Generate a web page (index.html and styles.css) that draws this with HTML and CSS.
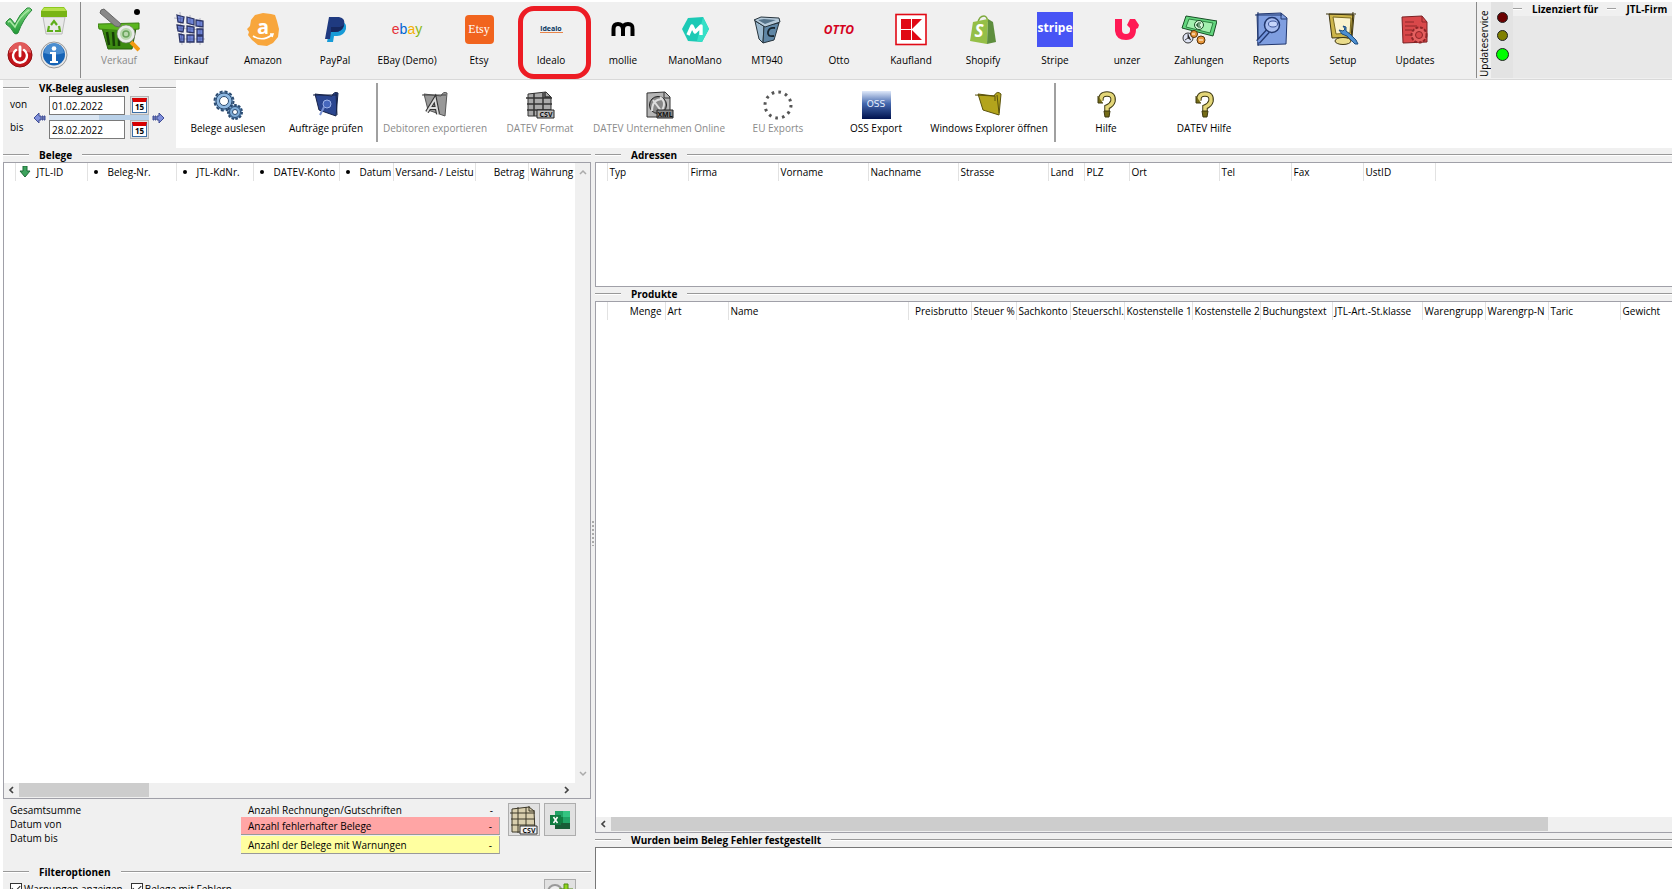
FILE: index.html
```html
<!DOCTYPE html>
<html lang="de">
  <head>
    <meta charset="UTF-8" />
    <meta name="viewport" content="width=device-width, initial-scale=1.0" />
    <title>VK-Belege</title>
    <link rel="stylesheet" href="styles.css">
  </head>
  <body>
    <div class="app">
      <header class="toolbar">
        <div class="quick">
          <button class="quick-btn" type="button" aria-label="OK">
            <svg viewBox="0 0 28 28"><defs><linearGradient id="gCheck" x1="0" y1="0" x2="0" y2="1"><stop offset="0" stop-color="#7fd67f"/><stop offset="1" stop-color="#1f9a35"/></linearGradient></defs><path d="M1 15 4 12q1-1 2 0l4 5Q15 6 22 1q3-1 5 2Q18 12 13 26q-2 2-4 0Q6 20 1 17z" fill="url(#gCheck)" stroke="#2a8a3c"/><path d="M3 15l2-1 5 6Q15 9 24 3" fill="none" stroke="#a9e8a5" stroke-width="1.5"/></svg>
          </button>
          <button class="quick-btn" type="button" aria-label="Papierkorb">
            <svg viewBox="0 0 28 28"><path d="M3 10h22l-3 17H6z" fill="#e9e9e9" stroke="#bcbcbc"/><path d="M1 4l3-4h20l3 4v6H1z" fill="#8cc81e"/><path d="M1 4h26v6H1z" fill="#78b414"/><path d="M4 1h20l2 3H2z" fill="#b5e04a"/><path d="M11 18l3-4 3 4M19 19l1 5h-5M9 19l-1 5h5" fill="none" stroke="#5fae1c" stroke-width="2.2"/></svg>
          </button>
          <button class="quick-btn" type="button" aria-label="Beenden">
            <svg viewBox="0 0 28 28"><circle cx="15" cy="14" r="12" fill="#c4161c" stroke="#8f0d10"/><path d="M4 12a11 11 0 0 1 22 0Q15 7 4 12z" fill="#e05a5a"/><path d="M11 9a7 7 0 1 0 8 0" fill="none" stroke="#fff" stroke-width="2.4" stroke-linecap="round"/><path d="M15 6v9" stroke="#fff" stroke-width="2.8" stroke-linecap="round"/></svg>
          </button>
          <button class="quick-btn" type="button" aria-label="Info">
            <svg viewBox="0 0 28 28"><circle cx="14" cy="14" r="13" fill="#e8e8e8" stroke="#999"/><circle cx="14" cy="13.500" r="11" fill="#1663b5"/><path d="M4 12a10 10 0 0 1 20 0Q14 15 4 12z" fill="#4a8dd0"/><circle cx="14" cy="7.500" r="2.300" fill="#fff"/><path d="M10 11h6v9h2v2h-8v-2h2v-7h-2z" fill="#fff"/></svg>
          </button>
        </div>
        <nav class="tools">
          <button class="tool disabled" type="button">
            <svg class="icon basket" viewBox="0 0 42 44"><path d="M4 20h34l-4 21H10z" fill="#3c8a12" stroke="#275f0a"/><path d="M0 16l41-1v6q-20 3-40 0z" fill="#5bb51f" stroke="#3b8012"/><path d="M9 24l2 13M15 24l1 14M21 24v14" stroke="#163f06" stroke-width="2.500"/><path d="M3 2l3-1 17 15-2 3-4-1L2 5z" fill="#888" stroke="#666"/><path d="M33 34l8 8" stroke="#f39a14" stroke-width="4"/><circle cx="28" cy="26" r="7.500" fill="#b9d8ad" stroke="#e8ebe8" stroke-width="3"/><circle cx="28" cy="26" r="9" fill="none" stroke="#777" stroke-width=".6"/><circle cx="28" cy="26" r="3" fill="none" stroke="#6aa45c" stroke-width="1.500"/><circle cx="39" cy="4" r="3" fill="#000"/></svg>
            <span>Verkauf</span>
          </button>
          <button class="tool" type="button">
            <svg class="icon" viewBox="0 0 36 36"><g fill="#6f84d6" stroke="#2c3566" stroke-width="1.300"><path d="M4 4l7 2-1 6-5-1zM14 6l7 2v6l-7-2zM23 9l7 1v6l-7-1zM4 14l7 1-1 6-5-1zM14 15l7 1v6l-7-1zM24 18h6v6h-6zM6 23l5 1v7H7zM14 24h7v7h-7zM24 25h6v6h-6z"/></g><path d="M1 7l10 1M3 17l27 2M6 28h26M7 1l2 33M17 4v29M27 7v27" stroke="#2c3566" stroke-width=".5" opacity=".6"/></svg>
            <span>Einkauf</span>
          </button>
          <button class="tool" type="button">
            <svg class="icon" viewBox="0 0 36 36"><path d="M10 4l8-2 8 1 4 1 2 6 2 8-1 8-5 6-6 3-9-1-6-5-4-5 1-3-2-3 3-3 1-6z" fill="#f8a63c"/><text x="18" y="23" class="logo-amazon">a</text><path d="M8 25q9 6 19-1M25 23l3 0-1 3" fill="none" stroke="#fff" stroke-width="1.600"/></svg>
            <span>Amazon</span>
          </button>
          <button class="tool" type="button">
            <svg class="icon" viewBox="0 0 36 36"><path d="M14 11h11q5 1 4 7-2 7-9 7h-3l-1 6h-6z" fill="#179bd7"/><path d="M12 6h10q7 1 5 9-2 6-9 6h-4l-1 7H8z" fill="#1f3a80"/><path d="M14 16h9l4-2q-2 7-9 7h-4z" fill="#16285f"/></svg>
            <span>PayPal</span>
          </button>
          <button class="tool" type="button">
            <svg class="icon" viewBox="0 0 36 36"><text x="18" y="23" class="logo-ebay"><tspan fill="#e53238">e</tspan><tspan fill="#0064d2">b</tspan><tspan fill="#f5af02">a</tspan><tspan fill="#86b817">y</tspan></text></svg>
            <span>EBay (Demo)</span>
          </button>
          <button class="tool" type="button">
            <svg class="icon" viewBox="0 0 36 36"><rect x="4" y="4" width="29" height="29" rx="4" fill="#f1641e"/><text x="18" y="22" class="logo-etsy">Etsy</text></svg>
            <span>Etsy</span>
          </button>
          <button class="tool marked" type="button">
            <svg class="icon" viewBox="0 0 36 36"><text x="18" y="20" class="logo-idealo">idealo</text><path d="M7 21.500h23" stroke="#e8854a"/></svg>
            <span>Idealo</span>
          </button>
          <button class="tool" type="button">
            <svg class="icon" viewBox="0 0 36 36"><path d="M8.500 25v-7q0-5 4.500-5t5 5v7m0-7q0-5 5-5t4.500 5v7" fill="none" stroke="#000" stroke-width="4"/></svg>
            <span>mollie</span>
          </button>
          <button class="tool" type="button">
            <svg class="icon" viewBox="0 0 36 36"><path d="M11 7l15-1 6 12-7 13-14-1-6-12z" fill="#1cc9b5"/><path d="M26 6l6 12-7 13-5-1z" fill="#35e0c7"/><path d="M11 24l4-9 3 6 6-6v9" fill="none" stroke="#fff" stroke-width="3.400" stroke-linejoin="round"/></svg>
            <span>ManoMano</span>
          </button>
          <button class="tool" type="button">
            <svg class="icon" viewBox="0 0 36 36"><path d="M6 10l9 5-1 17-4-4z" fill="#9bb9cf" stroke="#26333c"/><path d="M15 15l15-3-5 17-11 3z" fill="#5f86a5" stroke="#26333c"/><path d="M5 9l7-3 18 1 1 4-15 5z" fill="#b6cbdb" stroke="#26333c"/><path d="M9 9l6-1 12 1-11 4z" fill="#56748b"/><path d="M26 17q-6-1-7 4t6 4" fill="none" stroke="#16242e" stroke-width="1.800"/></svg>
            <span>MT940</span>
          </button>
          <button class="tool" type="button">
            <svg class="icon" viewBox="0 0 36 36"><text x="18" y="23" class="logo-otto">OTTO</text></svg>
            <span>Otto</span>
          </button>
          <button class="tool" type="button">
            <svg class="icon" viewBox="0 0 36 36"><rect x="3" y="3.500" width="30" height="30" fill="#fff" stroke="#e10915" stroke-width="1.600"/><path d="M8 8h10v10H8zM8 19h10v10H8zM19 8h10L19 18zM19 19l10 10H19z" fill="#e10915"/></svg>
            <span>Kaufland</span>
          </button>
          <button class="tool" type="button">
            <svg class="icon" viewBox="0 0 36 36"><path d="M13 12q1-7 6-7 3 0 4 6" fill="none" stroke="#7da93c" stroke-width="1.500"/><path d="M8 11l15-3-1 25-17-3z" fill="#95bf47"/><path d="M23 8l5 3 3 20-9 2z" fill="#5e8e3e"/><text x="14" y="26" class="logo-shopify">S</text></svg>
            <span>Shopify</span>
          </button>
          <button class="tool" type="button">
            <svg class="icon" viewBox="0 0 36 36"><path d="M0 1h36v35H0z" fill="#4754f5"/><text x="18" y="21" class="logo-stripe">stripe</text></svg>
            <span>Stripe</span>
          </button>
          <button class="tool" type="button">
            <svg class="icon" viewBox="0 0 36 36"><path d="M6 8h7v11q0 4 4 4t4-4v-2l-3-3 3-6h5l4 6-1 3-2 1q0 11-10 11T6 20z" fill="#ff1a55"/></svg>
            <span>unzer</span>
          </button>
          <button class="tool" type="button">
            <svg class="icon" viewBox="0 0 36 36"><path d="M5 5l31 5-4 15L1 17z" fill="#63d67e" stroke="#174d24"/><path d="M8 8l24 4-3 10-24-6z" fill="#a3f0af" stroke="#2c8040"/><circle cx="18" cy="14" r="4.500" fill="#d6f7d8" stroke="#174d24"/><path d="M20 12q-4-1-4 2t4 2m-5-2h4" fill="none" stroke="#174d24"/><circle cx="7" cy="27" r="5" fill="#dfe4f4" stroke="#333"/><path d="M7 23v4l3 2M7 27l-3 2" stroke="#444"/><circle cx="13" cy="23" r="3.500" fill="#e9983b" stroke="#543008"/><circle cx="20" cy="29" r="4" fill="#e9983b" stroke="#543008"/><path d="M18 29h4M11 23h3" stroke="#fff"/></svg>
            <span>Zahlungen</span>
          </button>
          <button class="tool" type="button">
            <svg class="icon" viewBox="0 0 36 36"><path d="M4 3l24-1 6 5-1 26-28 1z" fill="#7f9ee0" stroke="#22386f"/><path d="M28 2v6h6M2 4h27M5 1v34" fill="none" stroke="#22386f"/><path d="M15 20L5 31" stroke="#22386f" stroke-width="5"/><path d="M15 20L5 31" stroke="#7496df" stroke-width="2.500"/><circle cx="19" cy="14" r="7.500" fill="#a8bdf0" stroke="#22386f" stroke-width="1.500"/><ellipse cx="20" cy="13" rx="4.500" ry="3" fill="#c8d6fb" stroke="#3e569a"/></svg>
            <span>Reports</span>
          </button>
          <button class="tool" type="button">
            <svg class="icon" viewBox="0 0 36 36"><path d="M4 3l25 1-2 22-20 1z" fill="#cdb54a" stroke="#3f3611"/><path d="M8 6l18 1-1 15-14 1z" fill="#fbf3ce" stroke="#7b6b20"/><path d="M1 3h30M28 1l-2 27" stroke="#3f3611" fill="none"/><ellipse cx="18" cy="30" rx="8" ry="3.500" fill="#eadc8b" stroke="#3f3611"/><path d="M18 15l3 1v4l4 3 6 6 2 4-3 0-8-8-5-2-3-4 4 1 2-2z" fill="#4d8fd1" stroke="#1d4d7f"/></svg>
            <span>Setup</span>
          </button>
          <button class="tool" type="button">
            <svg class="icon" viewBox="0 0 36 36"><path d="M5 6l20-1 5 6v20L6 32z" fill="#d9484a" stroke="#7a2022"/><path d="M25 5v6h5M8 11h9M8 15h12M8 19h7M8 24h6" stroke="#8d2628" fill="none"/><circle cx="22" cy="24" r="7.500" fill="#e4605f" stroke="#8d2628" stroke-width="2" stroke-dasharray="3 1.500"/><circle cx="22" cy="24" r="3.500" fill="#d9484a" stroke="#8d2628"/></svg>
            <span>Updates</span>
          </button>
        </nav>
        <div class="service">
          <span class="service-label">Updateservice</span>
          <div class="lights">
            <i class="light red"></i>
            <i class="light olive"></i>
            <i class="light green"></i>
          </div>
        </div>
        <div class="license">
          <h2 class="license-title">Lizenziert für</h2>
          <h2 class="license-title">JTL-Firm</h2>
        </div>
      </header>

      <div class="actions">
        <section class="range">
          <h2 class="group-title">VK-Beleg auslesen</h2>
          <div class="range-body">
            <div class="range-labels">
              <label for="von">von</label>
              <label for="bis">bis</label>
            </div>
            <button class="arrow" type="button" aria-label="Zurück">
              <svg viewBox="0 0 13 12"><path d="M1 6l5-5v3h2v4H6v3zM9 4h1v4H9zM11 4h1v4h-1z" fill="#8090dc" stroke="#3f4c94"/></svg>
            </button>
            <div class="dates">
              <div class="date-row">
                <input class="date" id="von" type="text" value="01.02.2022" />
                <button class="cal" type="button" aria-label="Kalender von"><b>15</b></button>
              </div>
              <div class="strip"><div class="strip-fill"></div></div>
              <div class="date-row">
                <input class="date" id="bis" type="text" value="28.02.2022" />
                <button class="cal" type="button" aria-label="Kalender bis"><b>15</b></button>
              </div>
            </div>
            <button class="arrow" type="button" aria-label="Vor">
              <svg viewBox="0 0 13 12"><path d="M12 6L7 1v3H5v4h2v3zM3 4h1v4H3zM1 4h1v4H1z" fill="#8090dc" stroke="#3f4c94"/></svg>
            </button>
          </div>
        </section>

        <nav class="action-list">
          <button class="action" type="button">
            <svg viewBox="0 0 30 30"><g stroke="#2c4b70"><circle cx="11" cy="11" r="9.500" fill="#8fb9e2" stroke-width="2" stroke-dasharray="3 2"/><circle cx="11" cy="11" r="8" fill="#8fb9e2"/><circle cx="11" cy="11" r="4.500" fill="#fff"/><circle cx="22" cy="22" r="7" fill="#6e9fd0" stroke-width="2" stroke-dasharray="2.500 1.500"/><circle cx="22" cy="22" r="5.500" fill="#7fadd9"/><circle cx="22" cy="22" r="2.500" fill="#fff"/></g></svg>
            <span>Belege auslesen</span>
          </button>
          <button class="action" type="button">
            <svg viewBox="0 0 30 30"><path d="M4 4l17 2q2-5 6-3l-2 23-17-6z" fill="#2b4690" stroke="#162348"/><path d="M2 5h24M25 3l1 22" stroke="#162348"/><circle cx="16" cy="14" r="4" fill="#4667bd" stroke="#9db2e8"/><path d="M13 17l-4 8" stroke="#7a92d3" stroke-width="2"/></svg>
            <span>Aufträge prüfen</span>
          </button>
          <i class="divider"></i>
          <button class="action wide disabled" type="button">
            <svg viewBox="0 0 30 30"><path d="M4 4l17 2q2-5 6-3l-2 23-17-6z" fill="#999" stroke="#555"/><path d="M2 5h24" stroke="#444"/><path d="M7 22l8-13 3 15M10 18h7" fill="none" stroke="#333" stroke-width="4"/><path d="M7 22l8-13 3 15M10 18h7" fill="none" stroke="#ddd" stroke-width="1.800"/></svg>
            <span>Debitoren exportieren</span>
          </button>
          <button class="action disabled" type="button">
            <svg viewBox="0 0 30 30"><path d="M3 4l18-2 5 5v19H3z" fill="#aaa" stroke="#333"/><path d="M1 8h26M2 14h25M2 20h24M9 3v23M18 3v20M20 2v5h6" fill="none" stroke="#333" stroke-width="1.500"/><path d="M12 20h17v8H12z" fill="#bbb" stroke="#222"/><text x="21" y="27" class="tag">CSV</text></svg>
            <span>DATEV Format</span>
          </button>
          <button class="action wider disabled" type="button">
            <svg viewBox="0 0 30 30"><path d="M3 3l18-1 5 5v20H3z" fill="#b5b5b5" stroke="#333"/><path d="M20 2v6h6" fill="none" stroke="#333"/><circle cx="14" cy="15" r="8.500" fill="#888" stroke="#222"/><path d="M8 21Q8 9 19 9M9 10l9 12M16 7q8 6 0 16" fill="none" stroke="#ddd" stroke-width="2"/><path d="M13 20h16v8H13z" fill="#888" stroke="#222"/><text x="21" y="27" class="tag">XML</text></svg>
            <span>DATEV Unternehmen Online</span>
          </button>
          <button class="action disabled" type="button">
            <svg viewBox="0 0 30 30"><circle cx="15" cy="15" r="13" fill="none" stroke="#555" stroke-width="3" stroke-dasharray="2.600 4.206"/></svg>
            <span>EU Exports</span>
          </button>
          <button class="action" type="button">
            <svg viewBox="0 0 30 30"><defs><linearGradient id="gOss" x1="0" y1="0" x2="0" y2="1"><stop offset="0" stop-color="#dfe9fa"/><stop offset=".45" stop-color="#4468ae"/><stop offset="1" stop-color="#00124e"/></linearGradient></defs><path d="M1 1h29v28H1z" fill="url(#gOss)"/><text x="15" y="17" class="oss">OSS</text></svg>
            <span>OSS Export</span>
          </button>
          <button class="action widest" type="button">
            <svg viewBox="0 0 30 30"><path d="M4 4l16 2q3-6 7-2l-2 21-16-5z" fill="#b3a41c" stroke="#5b530c"/><path d="M1 5l20 1v5M23 5l2 18" fill="none" stroke="#5b530c"/></svg>
            <span>Windows Explorer öffnen</span>
          </button>
          <i class="divider"></i>
          <button class="action" type="button">
            <svg viewBox="0 0 30 30"><path d="M10 11q-1-7 6-7 7 0 6 7-1 4-6 6v4" fill="none" stroke="#3d3810" stroke-width="5.500"/><path d="M10 11q-1-7 6-7 7 0 6 7-1 4-6 6v4" fill="none" stroke="#e3d678" stroke-width="3.500"/><path d="M7 6v7h5M13 21h6l-1 6h-4z" fill="#756c17" stroke="#3d3810"/></svg>
            <span>Hilfe</span>
          </button>
          <button class="action" type="button">
            <svg viewBox="0 0 30 30"><path d="M10 11q-1-7 6-7 7 0 6 7-1 4-6 6v4" fill="none" stroke="#3d3810" stroke-width="5.500"/><path d="M10 11q-1-7 6-7 7 0 6 7-1 4-6 6v4" fill="none" stroke="#e3d678" stroke-width="3.500"/><path d="M7 6v7h5M13 21h6l-1 6h-4z" fill="#756c17" stroke="#3d3810"/></svg>
            <span>DATEV Hilfe</span>
          </button>
        </nav>
      </div>

      <main class="workspace">
        <section class="left">
          <h2 class="group-title">Belege</h2>
          <div class="panel receipts">
            <div class="grid-area">
              <table class="grid">
                <colgroup>
                  <col class="c-11" /><col class="c-72" /><col class="c-89" /><col class="c-77" /><col class="c-86" />
                  <col class="c-54" /><col class="c-82" /><col class="c-53" /><col />
                </colgroup>
                <thead>
                  <tr>
                    <th></th>
                    <th><svg class="sort" viewBox="0 0 12 12"><path d="M4 0h4v5h3L6 11 1 5h3z" fill="#3da35d" stroke="#1d6a36"/></svg>JTL-ID</th>
                    <th class="dot">Beleg-Nr.</th>
                    <th class="dot">JTL-KdNr.</th>
                    <th class="dot">DATEV-Konto</th>
                    <th class="dot">Datum</th>
                    <th>Versand- / Leistu</th>
                    <th class="num">Betrag</th>
                    <th>Währung</th>
                  </tr>
                </thead>
              </table>
              <div class="vscroll">
                <svg viewBox="0 0 8 6"><path d="M1 5l3-3 3 3" fill="none" stroke="#aaa" stroke-width="1.500"/></svg>
                <svg viewBox="0 0 8 6"><path d="M1 1l3 3 3-3" fill="none" stroke="#aaa" stroke-width="1.500"/></svg>
              </div>
            </div>
            <div class="hscroll">
              <svg viewBox="0 0 6 8"><path d="M5 1L2 4l3 3" fill="none" stroke="#444" stroke-width="1.700"/></svg>
              <div class="track"><div class="thumb short"></div></div>
              <svg viewBox="0 0 6 8"><path d="M1 1l3 3-3 3" fill="none" stroke="#444" stroke-width="1.700"/></svg>
            </div>
          </div>

          <div class="summary">
            <div class="totals">
              <span>Gesamtsumme</span>
              <span>Datum von</span>
              <span>Datum bis</span>
            </div>
            <div class="counts">
              <div class="count"><span>Anzahl Rechnungen/Gutschriften</span><span>-</span></div>
              <div class="count error"><span>Anzahl fehlerhafter Belege</span><span>-</span></div>
              <div class="count warn"><span>Anzahl der Belege mit Warnungen</span><span>-</span></div>
            </div>
            <button class="square" type="button" aria-label="CSV Export">
              <svg viewBox="0 0 30 30"><path d="M3 4l17-2 5 4 1 21H3z" fill="#d9cfae" stroke="#3d3828"/><path d="M1 8h25M2 14h24M2 20h24M9 2v26M17 2v20M20 1v5h6" fill="none" stroke="#3d3828"/><path d="M11 21h17v8H11z" fill="#f3f3f3" stroke="#333"/><text x="20" y="28" class="tag">CSV</text></svg>
            </button>
            <button class="square" type="button" aria-label="Excel Export">
              <svg viewBox="0 0 30 30"><path d="M10 6h8v18h-8z" fill="#21a366"/><path d="M18 6h7v6h-7z" fill="#33c481"/><path d="M10 12h8v6h-8z" fill="#107c41"/><path d="M18 12h7v6h-7z" fill="#21a366"/><path d="M10 18h15v6H10z" fill="#185c37"/><path d="M5 10h11v10H5z" fill="#107c41"/><path d="M8.500 12l4 6m0-6l-4 6" stroke="#fff" stroke-width="1.500"/></svg>
            </button>
          </div>

          <h2 class="group-title">Filteroptionen</h2>
          <div class="filters">
            <label class="check"><input type="checkbox" checked />Warnungen anzeigen</label>
            <label class="check"><input type="checkbox" checked />Belege mit Fehlern</label>
            <button class="square" type="button" aria-label="Filter hinzufügen">
              <svg viewBox="0 0 30 30"><circle cx="10" cy="11" r="7" fill="#eee" stroke="#999" stroke-width="2"/><path d="M19 3h4v5h5v4h-5v5h-4v-5h-5V8h5z" fill="#8fd41c" stroke="#4e8a10"/></svg>
            </button>
          </div>
        </section>

        <div class="splitter"></div>

        <section class="right">
          <h2 class="group-title">Adressen</h2>
          <div class="panel addresses">
            <div class="grid-area">
              <table class="grid">
                <colgroup>
                  <col class="c-11" /><col class="c-81" /><col class="c-90" /><col class="c-90" /><col class="c-90" /><col class="c-90" />
                  <col class="c-36" /><col class="c-45" /><col class="c-90" /><col class="c-72" /><col class="c-72" /><col class="c-72" /><col />
                </colgroup>
                <thead>
                  <tr>
                    <th></th>
                    <th>Typ</th>
                    <th>Firma</th>
                    <th>Vorname</th>
                    <th>Nachname</th>
                    <th>Strasse</th>
                    <th>Land</th>
                    <th>PLZ</th>
                    <th>Ort</th>
                    <th>Tel</th>
                    <th>Fax</th>
                    <th>UstID</th>
                    <th></th>
                  </tr>
                </thead>
              </table>
            </div>
          </div>

          <h2 class="group-title">Produkte</h2>
          <div class="panel products">
            <div class="grid-area">
              <table class="grid">
                <colgroup>
                  <col class="c-11" /><col class="c-58" /><col class="c-63" /><col class="c-180" /><col class="c-63" /><col class="c-45" />
                  <col class="c-54" /><col class="c-54" /><col class="c-68" /><col class="c-68" /><col class="c-72" /><col class="c-90" />
                  <col class="c-63" /><col class="c-63" /><col class="c-72" /><col />
                </colgroup>
                <thead>
                  <tr>
                    <th></th>
                    <th class="num">Menge</th>
                    <th>Art</th>
                    <th>Name</th>
                    <th class="num">Preisbrutto</th>
                    <th>Steuer %</th>
                    <th>Sachkonto</th>
                    <th>Steuerschl.</th>
                    <th>Kostenstelle 1</th>
                    <th>Kostenstelle 2</th>
                    <th>Buchungstext</th>
                    <th>JTL-Art.-St.klasse</th>
                    <th>Warengrupp</th>
                    <th>Warengrp-N</th>
                    <th>Taric</th>
                    <th>Gewicht</th>
                  </tr>
                </thead>
              </table>
            </div>
            <div class="hscroll">
              <svg viewBox="0 0 6 8"><path d="M5 1L2 4l3 3" fill="none" stroke="#444" stroke-width="1.700"/></svg>
              <div class="track"><div class="thumb long"></div></div>
            </div>
          </div>

          <h2 class="group-title">Wurden beim Beleg Fehler festgestellt</h2>
          <div class="panel messages"></div>
        </section>
      </main>
    </div>
  </body>
</html>
```
FILE: styles.css
```css
*,
*::before,
*::after {
  box-sizing: border-box;
}

body {
  margin: 0;
  background: #fff;
  color: #000;
  font: 10px/14px "Open Sans", "Noto Sans", sans-serif;
  overflow: hidden;
}

button {
  margin: 0;
  padding: 0;
  border: 0;
  background: none;
  color: inherit;
  font: inherit;
}

svg {
  display: block;
  flex: none;
}

h2 {
  margin: 0;
  font-size: 10px;
  line-height: 14px;
}

/* the lower edge of the window runs below the screen */
.app {
  display: flex;
  flex-direction: column;
  height: calc(100vh + 23px);
  padding-top: 2px;
}

/* top toolbar */
.toolbar {
  display: flex;
  height: 78px;
  background: #f0f0f0;
  border-bottom: 1px solid #d9d9d9;
}

.quick {
  display: grid;
  grid-template-columns: 28px 28px;
  grid-template-rows: 28px 28px;
  gap: 6px 7px;
  width: 81px;
  margin-bottom: 1px;
  padding: 5px 0 0 5px;
  border-right: 1px solid #8a8a8a;
}

.quick-btn svg {
  width: 28px;
  height: 28px;
}

.tools {
  display: flex;
  padding-left: 2px;
}

.tool {
  position: relative;
  display: flex;
  flex-direction: column;
  align-items: center;
  width: 72px;
  padding-top: 9px;
  white-space: nowrap;
}

.icon {
  width: 36px;
  height: 36px;
  margin-bottom: 6px;
}

.basket {
  width: 42px;
  height: 44px;
  margin: -3px 0 1px;
}

.disabled {
  color: #8a8a8a;
}

.marked::after {
  content: "";
  position: absolute;
  top: 4px;
  left: 3px;
  width: 73px;
  height: 73px;
  border: 5px solid #ed1c24;
  border-radius: 16px;
}

.logo-amazon,
.logo-ebay,
.logo-etsy,
.logo-idealo,
.logo-otto,
.logo-shopify,
.logo-stripe,
.tag,
.oss {
  text-anchor: middle;
}

.logo-amazon {
  fill: #fff;
  font: bold 20px "Open Sans", sans-serif;
}

.logo-ebay {
  font: 14px "Liberation Sans", sans-serif;
}

.logo-etsy {
  fill: #fff;
  font: 12px "Liberation Serif", serif;
}

.logo-idealo {
  fill: #0a3761;
  font: bold 7px "Open Sans", sans-serif;
}

.logo-otto {
  fill: #d4021d;
  font: italic bold 12px "Open Sans", sans-serif;
}

.logo-shopify {
  fill: #fff;
  font: italic bold 17px "Open Sans", sans-serif;
}

.logo-stripe {
  fill: #fff;
  font: bold 12px "Open Sans", sans-serif;
}

.tag {
  fill: #111;
  font: bold 7px "Open Sans", sans-serif;
}

.oss {
  fill: #e6eefc;
  font: 9px "DejaVu Sans", sans-serif;
}

.service {
  display: flex;
  margin: 0 0 1px 25px;
  border-left: 1px solid #8a8a8a;
}

.service-label {
  width: 14px;
  padding-top: 1px;
  line-height: 14px;
  text-align: left;
  writing-mode: vertical-rl;
  transform: rotate(180deg);
}

.lights {
  display: flex;
  flex-direction: column;
  align-items: center;
  gap: 7px;
  width: 22px;
  padding-top: 10px;
  background: #e3e3e3;
}

.light {
  width: 11px;
  height: 11px;
  border: 1px solid #222;
  border-radius: 50%;
}

.red {
  background: #6b0000;
}

.olive {
  background: #808000;
}

.green {
  width: 13px;
  height: 13px;
  background: #0f0;
}

.license {
  display: flex;
  flex: 1;
  align-items: flex-start;
  min-width: 0;
  margin-bottom: 1px;
  background: linear-gradient(#f0f0f0 14px, #e8e8e8 14px);
  overflow: hidden;
}

.license-title {
  display: flex;
  flex: none;
  align-items: center;
  gap: 10px;
  padding-right: 9px;
}

.license-title::before {
  content: "";
  width: 9px;
  border-top: 1px solid #a0a0a0;
  border-bottom: 1px solid #fff;
}

/* second row */
.actions {
  display: flex;
  height: 68px;
  padding-left: 3px;
}

.group-title {
  display: flex;
  flex: none;
  align-items: center;
  gap: 10px;
  height: 14px;
  white-space: nowrap;
}

.group-title::before,
.group-title::after {
  content: "";
  width: 26px;
  border-top: 1px solid #999;
  border-bottom: 1px solid #fff;
}

.group-title::after {
  flex: 1;
}

.range {
  width: 173px;
  padding-top: 1px;
  background: #f0f0f0;
}

.range-body {
  display: flex;
  align-items: center;
  gap: 3px;
  padding: 1px 0 0 7px;
}

.range-labels {
  display: flex;
  flex-direction: column;
  gap: 9px;
  width: 20px;
  padding-bottom: 4px;
}

.arrow svg {
  width: 13px;
  height: 12px;
}

.date-row {
  display: flex;
  justify-content: space-between;
  width: 100px;
}

.date {
  width: 76px;
  height: 19px;
  padding: 0 2px;
  border: 1px solid #7a7a7a;
  background: #fff;
  font: inherit;
}

.cal {
  width: 19px;
  height: 19px;
  padding: 1px;
  border: 1px solid #b5b5b5;
  background: #e1e1e1;
}

.cal b {
  display: block;
  height: 15px;
  border: 1px solid #3b6ea5;
  border-top: 4px solid #d80000;
  background: #fff;
  font-size: 8px;
  line-height: 10px;
}

.strip {
  height: 5px;
  background: #b8d0e8;
}

.strip-fill {
  width: 50%;
  height: 5px;
  background: #dae6f3;
}

.action-list {
  display: flex;
  padding-left: 3px;
}

.action {
  display: flex;
  flex-direction: column;
  align-items: center;
  gap: 1px;
  width: 98px;
  padding-top: 10px;
  white-space: nowrap;
}

.action svg {
  width: 30px;
  height: 30px;
}

.wide {
  width: 112px;
}

.wider {
  width: 140px;
}

.widest {
  width: 128px;
}

.divider {
  width: 2px;
  height: 59px;
  margin: 3px 1px 0;
  background: #a0a0a0;
}

/* work area */
.workspace {
  display: flex;
  flex: 1;
  min-height: 0;
  margin-left: 3px;
  background: #f0f0f0;
}

.left {
  display: flex;
  flex: 0 0 588px;
  flex-direction: column;
}

.right {
  display: flex;
  flex: 1;
  flex-direction: column;
  min-width: 0;
}

.splitter {
  width: 4px;
  height: 26px;
  margin-top: 372px;
  background: radial-gradient(circle, #aaa 1px, transparent 1px) 0 0 / 4px 4px;
}

.panel {
  display: flex;
  flex-direction: column;
  border: 1px solid #a0a0a8;
  background: #fff;
}

.right .panel {
  border-right: 0;
}

.receipts,
.products {
  flex: 1;
  min-height: 0;
}

.addresses {
  height: 125px;
}

.messages {
  height: 65px;
  border-color: #777;
}

.grid-area {
  display: flex;
  flex: 1;
  min-height: 0;
}

.grid {
  flex: 1;
  align-self: flex-start;
  width: 100%;
  min-width: 0;
  table-layout: fixed;
  border-collapse: collapse;
}

.grid th {
  height: 18px;
  padding: 0 0 0 2px;
  border-right: 1px solid #e2e2e2;
  font-weight: normal;
  text-align: left;
  white-space: nowrap;
  overflow: hidden;
}

.grid th:last-child {
  border-right: 0;
}

.grid .num {
  padding-right: 3px;
  text-align: right;
}

.grid .dot::before {
  content: "";
  display: inline-block;
  width: 4px;
  height: 4px;
  margin: 0 10px 0 4px;
  border-radius: 50%;
  background: #000;
  vertical-align: 2px;
}

.sort {
  display: inline-block;
  width: 12px;
  height: 12px;
  margin: 0 6px 0 1px;
  vertical-align: -2px;
}

/* column widths */
.c-11 { width: 11px; }
.c-36 { width: 36px; }
.c-45 { width: 45px; }
.c-53 { width: 53px; }
.c-54 { width: 54px; }
.c-58 { width: 58px; }
.c-63 { width: 63px; }
.c-68 { width: 68px; }
.c-72 { width: 72px; }
.c-77 { width: 77px; }
.c-81 { width: 81px; }
.c-82 { width: 82px; }
.c-86 { width: 86px; }
.c-89 { width: 89px; }
.c-90 { width: 90px; }
.c-180 { width: 180px; }

.vscroll {
  display: flex;
  flex-direction: column;
  align-items: center;
  justify-content: space-between;
  width: 15px;
  padding: 6px 0;
  background: #f0f0f0;
}

.vscroll svg {
  width: 8px;
  height: 6px;
}

.hscroll {
  display: flex;
  align-items: center;
  gap: 5px;
  height: 15px;
  padding: 0 20px 1px 4px;
  background: #f0f0f0;
}

.hscroll svg {
  width: 6px;
  height: 8px;
}

.track {
  flex: 1;
}

.thumb {
  height: 14px;
  background: #cdcdcd;
}

.short {
  width: 24%;
}

.long {
  width: 90%;
}

/* summary below the receipts */
.summary {
  display: flex;
  align-items: flex-start;
  gap: 4px;
  height: 66px;
  padding: 4px 15px 0 7px;
}

.totals {
  display: flex;
  flex: 1;
  flex-direction: column;
}

.counts {
  display: flex;
  flex-direction: column;
  gap: 1px;
  width: 259px;
  margin-right: 4px;
}

.count {
  display: flex;
  justify-content: space-between;
  height: 13px;
  padding: 0 7px;
}

.error,
.warn {
  align-items: center;
  height: 18px;
  border-right: 1px solid #aaa;
  border-bottom: 1px solid #999;
}

.error {
  background: #ffa5a5;
}

.warn {
  background: #ffffa0;
}

.square {
  display: flex;
  align-items: center;
  justify-content: center;
  width: 32px;
  height: 33px;
  border: 1px solid #adadad;
  background: #e1e1e1;
}

.square svg {
  width: 30px;
  height: 30px;
}

.filters {
  display: flex;
  align-items: flex-start;
  gap: 8px;
  padding: 0 15px 0 7px;
}

.filters .square {
  margin-left: auto;
}

.check {
  display: flex;
  align-items: center;
  gap: 2px;
  padding-top: 3px;
}

.check input {
  appearance: none;
  width: 12px;
  height: 12px;
  margin: 0;
  border: 1px solid #333;
  background: #fff;
}

.check input:checked::before {
  content: "";
  display: block;
  width: 8px;
  height: 5px;
  margin: 1px;
  border: solid #222;
  border-width: 0 0 1px 1px;
  transform: rotate(-45deg);
}
```
